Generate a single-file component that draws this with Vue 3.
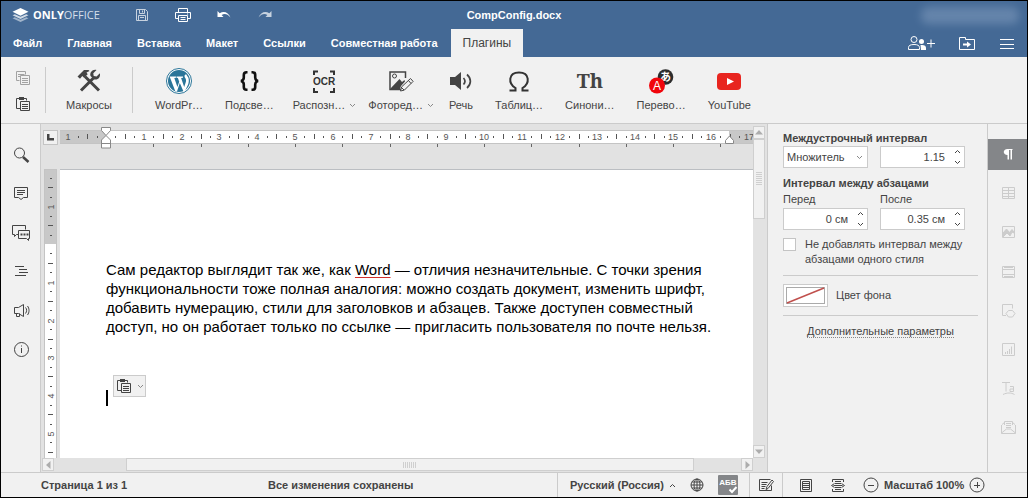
<script setup>
import { ref } from 'vue'

const tabs = ['Файл', 'Главная', 'Вставка', 'Макет', 'Ссылки', 'Совместная работа', 'Плагины']
const activeTab = ref('Плагины')

const plugins = [
  { id: 'wordpress', label: 'WordPr…' },
  { id: 'code', label: 'Подсве…' },
  { id: 'ocr', label: 'Распозн…', menu: true },
  { id: 'photo', label: 'Фоторед…', menu: true },
  { id: 'speech', label: 'Речь' },
  { id: 'symbols', label: 'Таблиц…' },
  { id: 'thesaurus', label: 'Синони…' },
  { id: 'translate', label: 'Перево…' },
  { id: 'youtube', label: 'YouTube' },
]

const before = ref('0 см')
const after = ref('0.35 см')
const spacing = ref('1.15')
const mode = ref('Множитель')
const noGap = ref(false)

const CM = 37.8
function scale(origin, from, to) {
  const marks = []
  for (let q = from * 4; q <= to * 4; q++) {
    if (q === 0) continue
    const pos = Math.round(origin + (q * CM) / 4)
    const kind = q % 4 === 0 ? 'num' : q % 2 === 0 ? 'half' : 'dot'
    marks.push({ pos, kind, text: Math.abs(q / 4) })
  }
  return marks
}
const hMarks = scale(46, -1, 17)
const vMarks = scale(75, -1.75, 5.5)
const tabStops = Array.from({ length: 13 }, (_, i) => Math.round(46 + (i + 1) * 1.25 * CM))
</script>

<template>
  <div class="app">
    <header class="header">
      <div class="titlebar">
        <div class="title-left">
          <a class="logo" href="#" aria-label="ONLYOFFICE">
            <svg width="17" height="14" viewBox="0 0 17 14">
              <path d="M8.500 14 0.500 10.300l2.300-1 5.700 2.500 5.700-2.500 2.300 1z" fill="#fff" opacity=".5" />
              <path d="M8.500 11 0.500 7.300l2.300-1 5.700 2.500 5.700-2.500 2.300 1z" fill="#fff" opacity=".75" />
              <path d="M8.500 0 16.500 3.800 8.500 7.700 0.500 3.800z" fill="#fff" />
            </svg>
            <span><b>ONLY</b>OFFICE</span>
          </a>
          <div class="quick">
            <button type="button" class="dim" aria-label="Сохранить">
              <svg width="16" height="16" viewBox="0 0 16 16" class="ln">
                <path d="M2.500 2.500h9l2 2v9h-11z M5.500 2.500v4h5v-4 M8.500 3.500v2 M4.500 13.500v-5h7v5 M6 10.500h4" />
              </svg>
            </button>
            <button type="button" aria-label="Печать">
              <svg width="16" height="16" viewBox="0 0 16 16" class="ln">
                <path d="M3.500 5.500v-4h9v4 M3.500 11.500h-3v-6h15v6h-3 M3.500 8.500h9v6h-9z M5.500 10.500h5 M5.500 12.500h5 M12 7h1" />
              </svg>
            </button>
            <button type="button" aria-label="Отменить">
              <svg width="16" height="16" viewBox="0 0 16 16">
                <path d="M1.500 4v6h6L5.600 8.100C8.500 6.200 11.500 7 14.500 10.500 12.500 5.500 8 3.500 3.700 6.200z" fill="#fff" />
              </svg>
            </button>
            <button type="button" class="dim" aria-label="Повторить">
              <svg width="16" height="16" viewBox="0 0 16 16">
                <path d="M14.500 4v6h-6l1.900-1.900C7.500 6.200 4.500 7 1.500 10.500 3.500 5.500 8 3.500 12.300 6.200z" fill="#fff" />
              </svg>
            </button>
          </div>
        </div>
        <h1 class="doc-name">CompConfig.docx</h1>
        <div class="user"><span class="smudge"></span></div>
      </div>
      <div class="tabbar">
        <nav class="tabs">
          <button v-for="t in tabs" :key="t" type="button" class="tab" :class="{ active: t === activeTab }" @click="activeTab = t">{{ t }}</button>
        </nav>
        <div class="tab-actions">
          <button type="button" aria-label="Совместный доступ">
            <svg width="28" height="16" viewBox="0 0 28 16" class="ln">
              <circle cx="7" cy="4.500" r="3" />
              <path d="M1.500 14.500v-2c0-2 2-3 5.500-3s5.500 1 5.500 3v2z M20 8.500h8 M24 4.500v8" />
              <circle cx="14.500" cy="6.500" r="2.500" fill="#fff" stroke="none" />
              <path d="M13.500 10c3.500-.5 5.500.5 5.500 3v2h-5z" fill="#fff" stroke="none" />
            </svg>
          </button>
          <button type="button" aria-label="Открыть расположение">
            <svg width="18" height="16" viewBox="0 0 18 16" class="ln">
              <path d="M1.500 14.500v-12h6v2h9v10z" />
              <path d="M5 9.500h5" stroke-width="2" />
              <path d="M9 6.500l4 3-4 3z" fill="#fff" stroke="none" />
            </svg>
          </button>
          <button type="button" aria-label="Меню">
            <svg width="16" height="16" viewBox="0 0 16 16" class="ln"><path d="M1 4.500h14M1 9.500h14M1 13.500h14" /></svg>
          </button>
        </div>
      </div>
    </header>

    <div class="toolbar">
      <div class="clip">
        <button type="button" class="faded" aria-label="Копировать">
          <svg width="16" height="16" viewBox="0 0 16 16" class="ln">
            <path d="M4.500 10.500h-3v-9h9v3 M3 4.500h2 M3 6.500h2 M3.500 4.500h6 M5.500 5.500h9v9h-9z M7 8.500h6M7 10.500h6M7 12.500h6" />
          </svg>
        </button>
        <button type="button" aria-label="Вставить">
          <svg width="16" height="16" viewBox="0 0 16 16" class="ln">
            <path d="M5.500 12.500h-4v-10h10v2 M5.500 5.500h9v9h-9z M7 8.500h6M7 10.500h6M7 12.500h6" />
            <path d="M4 1h5v3H4z" fill="#444" stroke="none" />
          </svg>
        </button>
      </div>
      <i class="sep"></i>
      <button type="button" class="plugin macros">
        <svg width="26" height="26" viewBox="0 0 26 26">
          <path d="M5 22.500 18 9.500" stroke="#444" stroke-width="3" />
          <path d="M9 8.500 23 22.500" stroke="#444" stroke-width="3" />
          <path d="M1.500 8.500 8 2h4.500l1 1-3 1.500 1.200 1.700L8 9.800 6.300 8 4 10.800z" fill="#444" />
          <path d="M20.500 2 17.300 5.200l.4 2.800 2.900.4L23.800 5.200C25 9.500 21.500 12.500 17.800 11.200L14.500 8C13.500 4.500 16.500 1 20.500 2z" fill="#444" />
        </svg>
        <span class="cap">Макросы</span>
      </button>
      <i class="sep"></i>
      <div class="plugins">
        <button v-for="p in plugins" :key="p.id" type="button" class="plugin" :class="{ 'has-menu': p.menu }">
          <svg width="28" height="26" viewBox="0 0 28 26">
            <template v-if="p.id === 'wordpress'">
              <circle cx="14" cy="13" r="12.500" fill="#fff" stroke="#2a7599" />
              <circle cx="14" cy="13" r="11" fill="#2a7599" />
              <path d="M4.600 8.500h6.400v1.200l-1.700.2 3.100 9.200 1.800-5.400-1.300-3.800-1.400-.2V8.500h6.500v1.200l-1.900.2 3.100 9.200 1.700-5.400c.6-2-.4-3.200-1-4.300-.7-1.300-.5-3 1.200-3.200l2.300 3.600c.7 2.600.4 4.600-.2 6.500L20 23l-1.500.5-3.700-8.500-2.900 8.700-1.700-.6L5.200 9.900z" fill="#fff" />
            </template>
            <g v-else-if="p.id === 'code'" fill="none" stroke="#111" stroke-width="2.600">
              <path d="M12.500 4.200h-1c-2 0-2.700 1-2.700 2.800v2.500c0 2-.8 3-2.800 3.500 2 .5 2.800 1.500 2.800 3.500V19c0 1.800.7 2.800 2.700 2.800h1" />
              <path d="M16.500 4.200h1c2 0 2.700 1 2.700 2.800v2.500c0 2 .8 3 2.800 3.500-2 .5-2.800 1.500-2.800 3.500V19c0 1.800-.7 2.800-2.700 2.800h-1" />
            </g>
            <g v-else-if="p.id === 'ocr'">
              <path d="M4 7V3.500h4 M20 3.500h4V7 M4 20v4h4 M20 24h4v-4" fill="none" stroke="#333" stroke-width="2" />
              <text x="14" y="17" text-anchor="middle" class="ocr">OCR</text>
            </g>
            <g v-else-if="p.id === 'photo'">
              <path d="M18.500 10V4H3v17.500h11" fill="none" stroke="#444" stroke-width="1.500" />
              <circle cx="7.500" cy="8" r="2" fill="none" stroke="#444" />
              <path d="M3.500 20.500 12.500 11l2.500 3 2.500-2 .5 1.500-4 4.500-1 3h-9z" fill="#444" />
              <path d="M13.500 23l1.200-4.200 8.800-8.300 2.600 2.900-8.700 8.700z" fill="#f1f1f1" stroke="#444" />
              <path d="M14.500 19.500l2.500 2.500M21.500 12.500l2.500 3" stroke="#444" />
            </g>
            <g v-else-if="p.id === 'speech'">
              <path d="M3 9h5l6-5v18l-6-5H3z" fill="#444" />
              <path d="M16.500 10c1.800 2 1.800 4.500 0 6.500 M20 6.500c4.500 4 4.500 9.500 0 13.500" fill="none" stroke="#444" stroke-width="1.700" />
            </g>
            <path v-else-if="p.id === 'symbols'" d="M4.500 22.500h6v-2.500C3 15.500 3 4.500 14 4.500s11 11 3.500 15.500v2.500h6" fill="none" stroke="#333" stroke-width="2" />
            <text v-else-if="p.id === 'thesaurus'" x="14" y="20" text-anchor="middle" class="th">Th</text>
            <g v-else-if="p.id === 'translate'">
              <circle cx="18.500" cy="9" r="7.800" fill="#2d2d2d" />
              <text x="18.500" y="13" text-anchor="middle" class="kana">あ</text>
              <circle cx="10" cy="17.500" r="8" fill="#f1060c" />
              <text x="10" y="22" text-anchor="middle" class="latin">A</text>
            </g>
            <g v-else>
              <rect x="2" y="5" width="24" height="17" rx="4" fill="#e8251f" />
              <path d="M12 10l7 3.500-7 3.500z" fill="#fff" />
            </g>
          </svg>
          <span class="cap">{{ p.label }}<svg v-if="p.menu" width="7" height="5" viewBox="0 0 7 5" class="chev"><path d="M1 1l2.500 2.500L6 1" /></svg></span>
        </button>
      </div>
    </div>

    <main class="body">
      <aside class="rail left">
        <button type="button" aria-label="Поиск">
          <svg width="20" height="20" viewBox="0 0 20 20" class="ln">
            <circle cx="8.500" cy="8" r="5" /><path d="M12 12l5.500 5" stroke-width="2.500" />
          </svg>
        </button>
        <button type="button" aria-label="Комментарии">
          <svg width="20" height="20" viewBox="0 0 20 20" class="ln">
            <path d="M3.500 3.500h13v10h-4l-2.500 2-2.500-2h-4z M6 6.500h8M6 8.500h8M6 10.500h6" />
          </svg>
        </button>
        <button type="button" aria-label="Чат">
          <svg width="20" height="20" viewBox="0 0 20 20" class="ln">
            <path d="M7 11.500H5.500l-2 2v-2h-2v-9h13v4 M7.500 7.500h11v8h-1v2l-2-2h-8z" />
            <path d="M9.500 11.500h2M12.500 11.500h2M15.500 11.500h2" stroke-width="2" />
          </svg>
        </button>
        <button type="button" aria-label="Навигация">
          <svg width="20" height="20" viewBox="0 0 20 20" class="ln">
            <path d="M4 4.500h9M8 7.500h8M8 10.500h9M4 13.500h11" />
          </svg>
        </button>
        <button type="button" aria-label="Обратная связь">
          <svg width="20" height="20" viewBox="0 0 20 20" class="ln">
            <path d="M3.500 6.500h4l5-3v12l-5-3h-4z M5.500 12.500v3h3v-3 M14.500 6.500c1.500 1.500 1.500 4 0 6 M16.500 5c2 2.500 2 6.500 0 9" />
          </svg>
        </button>
        <button type="button" aria-label="О программе">
          <svg width="20" height="20" viewBox="0 0 20 20" class="ln">
            <circle cx="10.500" cy="9.500" r="7" /><path d="M10.500 8v5M10.500 5.500v1" />
          </svg>
        </button>
      </aside>

      <section class="editor">
        <div class="corner"><button type="button" aria-label="Табуляция"><svg width="7" height="7" viewBox="0 0 7 7"><path d="M0 0h2.500v4H7v2.500H0z" fill="#444" /></svg></button></div>
        <div class="hruler">
          <svg class="hscale" width="100%" height="25">
            <rect x="0" y="6" width="100%" height="14" fill="#c8c8c8" />
            <rect x="46" y="6" width="623" height="14" fill="#fff" />
            <template v-for="m in hMarks" :key="m.pos">
              <text v-if="m.kind === 'num'" :x="m.pos" y="16" text-anchor="middle" class="num">{{ m.text }}</text>
              <rect v-else-if="m.kind === 'half'" :x="m.pos" y="10" width="1" height="5" fill="#555" />
              <rect v-else :x="m.pos" y="12" width="1" height="2" fill="#555" />
            </template>
            <path d="M0 6.500h800M0 19.500h800" stroke="#c4c4c4" />
            <rect v-for="s in tabStops" :key="'t' + s" :x="s" y="20" width="1" height="3" fill="#666" />
            <g fill="#fff" stroke="#888">
              <path d="M41.500 3.500h9v3l-4.500 5-4.500-5z" />
              <path d="M41.500 24v-8l4.500-4.500 4.500 4.500v8z M41.500 19.500h9" />
              <path d="M665.500 19.500v-3l4-4.500 4 4.500v3z" />
            </g>
          </svg>
        </div>
        <div class="vruler">
          <svg width="13" height="100%">
            <rect width="13" height="100%" fill="#fff" />
            <rect width="13" height="75" fill="#c8c8c8" />
            <template v-for="m in vMarks" :key="m.pos">
              <text v-if="m.kind === 'num'" :transform="`translate(10 ${m.pos + 1}) rotate(-90)`" text-anchor="middle" class="num">{{ m.text }}</text>
              <rect v-else-if="m.kind === 'half'" x="4" :y="m.pos" width="5" height="1" fill="#555" />
              <rect v-else x="6" :y="m.pos" width="2" height="1" fill="#555" />
            </template>
            <path d="M.5 0v600M12.500 0v600M0 .5h13" stroke="#c4c4c4" />
          </svg>
        </div>
        <article class="page">
          <p>
            Сам редактор выглядит так же, как <span class="typo">Word</span> — отличия незначительные. С точки зрения<br>
            функциональности тоже полная аналогия: можно создать документ, изменить шрифт,<br>
            добавить нумерацию, стили для заголовков и абзацев. Также доступен совместный<br>
            доступ, но он работает только по ссылке — пригласить пользователя по почте нельзя.
          </p>
          <div class="caret-line">
            <span class="caret"></span>
            <button type="button" class="paste" aria-label="Параметры вставки">
              <svg width="16" height="16" viewBox="0 0 16 16" class="ln">
                <path d="M5.500 12.500h-4v-10h10v2 M5.500 5.500h9v9h-9z M7 8.500h6M7 10.500h6M7 12.500h6" />
                <path d="M4 1h5v3H4z" fill="#444" stroke="none" />
              </svg>
              <svg width="7" height="5" viewBox="0 0 7 5" class="chev"><path d="M1 1l2.500 2.500L6 1" /></svg>
            </button>
          </div>
        </article>
        <div class="vscroll">
          <button type="button" aria-label="Вверх"><svg width="8" height="5" viewBox="0 0 8 5"><path d="M0 4.500 4 0l4 4.500z" fill="#adadad" /></svg></button>
          <div class="vthumb"><i></i></div>
          <button type="button" class="end" aria-label="Вниз"><svg width="8" height="5" viewBox="0 0 8 5"><path d="M0 .5 4 5 8 .5z" fill="#adadad" /></svg></button>
        </div>
        <div class="hscroll">
          <button type="button" aria-label="Влево"><svg width="5" height="8" viewBox="0 0 5 8"><path d="M4.500 0 0 4l4.500 4z" fill="#adadad" /></svg></button>
          <div class="htrack"><div class="hthumb"><i></i></div></div>
          <button type="button" aria-label="Вправо"><svg width="5" height="8" viewBox="0 0 5 8"><path d="M.5 0 5 4 .5 8z" fill="#adadad" /></svg></button>
        </div>
      </section>

      <aside class="panel">
        <label class="head" for="mode">Междустрочный интервал</label>
        <div class="pair">
          <div class="field">
            <select id="mode" v-model="mode"><option>Множитель</option><option>Минимум</option><option>Точно</option></select>
            <svg width="7" height="5" viewBox="0 0 7 5" class="chev pick"><path d="M1 1l2.500 2.500L6 1" /></svg>
          </div>
          <div class="field">
            <input v-model="spacing" type="text" aria-label="Значение интервала">
            <span class="spin">
              <button type="button" aria-label="Больше"><svg width="7" height="5" viewBox="0 0 7 5" class="chev dark"><path d="M1 4l2.500-2.500L6 4" /></svg></button>
              <button type="button" aria-label="Меньше"><svg width="7" height="5" viewBox="0 0 7 5" class="chev dark"><path d="M1 1l2.500 2.500L6 1" /></svg></button>
            </span>
          </div>
        </div>
        <div class="head second">Интервал между абзацами</div>
        <div class="pair">
          <div>
            <label class="lbl" for="before">Перед</label>
            <div class="field">
              <input id="before" v-model="before" type="text">
              <span class="spin">
                <button type="button" aria-label="Больше"><svg width="7" height="5" viewBox="0 0 7 5" class="chev dark"><path d="M1 4l2.500-2.500L6 4" /></svg></button>
                <button type="button" aria-label="Меньше"><svg width="7" height="5" viewBox="0 0 7 5" class="chev dark"><path d="M1 1l2.500 2.500L6 1" /></svg></button>
              </span>
            </div>
          </div>
          <div>
            <label class="lbl" for="after">После</label>
            <div class="field">
              <input id="after" v-model="after" type="text">
              <span class="spin">
                <button type="button" aria-label="Больше"><svg width="7" height="5" viewBox="0 0 7 5" class="chev dark"><path d="M1 4l2.500-2.500L6 4" /></svg></button>
                <button type="button" aria-label="Меньше"><svg width="7" height="5" viewBox="0 0 7 5" class="chev dark"><path d="M1 1l2.500 2.500L6 1" /></svg></button>
              </span>
            </div>
          </div>
        </div>
        <label class="check"><input v-model="noGap" type="checkbox"><span>Не добавлять интервал между<br>абзацами одного стиля</span></label>
        <div class="color-row">
          <button id="bg-color" type="button" class="swatch" aria-labelledby="bg-label">
            <svg width="39" height="17" viewBox="0 0 39 17"><rect x=".5" y=".5" width="38" height="16" fill="#fff" stroke="#aaa" /><path d="M1 16 38 1" stroke="#c0504d" stroke-width="1.500" /></svg>
          </button>
          <span id="bg-label">Цвет фона</span>
        </div>
        <div class="more"><a href="#">Дополнительные параметры</a></div>
      </aside>

      <aside class="rail right">
        <button type="button" class="on" aria-label="Параметры абзаца">
          <svg width="20" height="20" viewBox="0 0 20 20"><path d="M14.500 4H9.500C4.500 4 4.500 10 9.500 10v4.500H11V5h1.500v9.500H14V5h.5z" fill="#fff" /></svg>
        </button>
        <button type="button" aria-label="Таблица"><svg width="20" height="20" viewBox="0 0 20 20" class="ln"><path d="M4.500 3.500h12v11h-12z M4.500 6.500h12M4.500 9.500h12M4.500 12.500h12M10.500 3.500v11" /></svg></button>
        <button type="button" aria-label="Изображение"><svg width="20" height="20" viewBox="0 0 20 20" class="ln"><path d="M4.500 3.500h12v11h-12z" /><path d="M5 14V10l3.500-4 3 3.500 2.500-3 2 2.500v1l-2-1-2 4-3-3z" fill="#ccc" /></svg></button>
        <button type="button" aria-label="Колонтитулы"><svg width="20" height="20" viewBox="0 0 20 20" class="ln"><path d="M4.500 4.500h12v11h-12z M4.500 7.500h12M4.500 12.500h12M6 5.500h9M6 14.500h9" /></svg></button>
        <button type="button" aria-label="Фигура"><svg width="20" height="20" viewBox="0 0 20 20" class="ln"><path d="M8 14.500H4.500v-11h10v4" /><path d="M10.500 9.500h4l2.500 3-2.500 3.500h-4L8 12.500z" /></svg></button>
        <button type="button" aria-label="Диаграмма"><svg width="20" height="20" viewBox="0 0 20 20" class="ln"><path d="M4.500 3.500h12v12h-12z M7.500 14v-2M9.500 14v-3M11.500 14V9M13.500 14V6.500" /></svg></button>
        <button type="button" aria-label="Text Art"><svg width="20" height="20" viewBox="0 0 20 20" class="ln"><path d="M4 3.500h8M8 3.500v9M12 7.500h3.500v5H12v-2.500h3.500M5 15.500c4-2 8-2 11.500 0" /></svg></button>
        <button type="button" aria-label="Слияние"><svg width="20" height="20" viewBox="0 0 20 20" class="ln"><path d="M6.500 7V3.500h8V7 M4 6.500l2.500-2M17 6.500l-2.500-2 M3.500 7v8.500h14V7 M3.500 15l5-4h4l5 4 M8 5.500h5M8 7.500h5M8 9.500h5" /></svg></button>
      </aside>
    </main>

    <footer class="status">
      <span class="pages">Страница 1 из 1</span>
      <span class="saved">Все изменения сохранены</span>
      <div class="lang">
        <button type="button" class="lang-name">Русский (Россия)<svg width="7" height="5" viewBox="0 0 7 5" class="chev dark"><path d="M1 4l2.500-2.500L6 4" /></svg></button>
        <button type="button" aria-label="Язык документа"><svg width="16" height="16" viewBox="0 0 16 16" class="ln"><circle cx="8" cy="8" r="6" /><ellipse cx="8" cy="8" rx="3" ry="6" /><path d="M8 2v12M2 8h12M3 5h10M3 11h10" /></svg></button>
        <button type="button" aria-label="Проверка орфографии"><svg width="20" height="20" viewBox="0 0 20 20"><rect width="20" height="20" rx="1" fill="#848689" /><text x="10" y="10" text-anchor="middle" class="abc">АБВ</text><path d="M11.500 14.500l2.500 2.500 4.500-5" fill="none" stroke="#fff" stroke-width="2" /></svg></button>
      </div>
      <div class="review"><button type="button" aria-label="Рецензирование"><svg width="16" height="16" viewBox="0 0 16 16" class="ln"><path d="M12.500 2.500h-11v11h12v-5 M3.500 5.500h6M3.500 7.500h5M3.500 9.500h4M3.500 11.500h3" /><path d="M8 12.500l1-3 5-6.500 1.500 1.500-5.500 7z" fill="#f1f1f1" /></svg></button></div>
      <div class="zoom">
        <button type="button" aria-label="По размеру страницы"><svg width="16" height="16" viewBox="0 0 16 16" class="ln"><path d="M2.500 2.500h11v12h-11z M4.500 4.500h7v8h-7z M5 6.500h6M5 8.500h6M5 10.500h6" /></svg></button>
        <button type="button" aria-label="По ширине"><svg width="16" height="16" viewBox="0 0 16 16" class="ln"><path d="M2.500 5V2.500h11V5 M2.500 12v2.500h11V12 M5 4.500h6M5 12.500h6M5 6.500h6M5 10.500h6M3.500 8.500h9 M4.500 6.500l-3 2 3 2 M11.500 6.500l3 2-3 2" /></svg></button>
        <span class="scale">
          <button type="button" aria-label="Уменьшить"><svg width="16" height="16" viewBox="0 0 16 16" class="ln"><circle cx="8" cy="8" r="7" /><path d="M5 8.500h6" /></svg></button>
          <span>Масштаб 100%</span>
          <button type="button" aria-label="Увеличить"><svg width="16" height="16" viewBox="0 0 16 16" class="ln"><circle cx="8" cy="8" r="7" /><path d="M5 8.500h6M8.500 5v6" /></svg></button>
        </span>
      </div>
    </footer>
  </div>
</template>

<style>
body { background: #000; }
</style>

<style scoped>
.app {
  box-sizing: border-box;
  min-height: 100vh;
  display: flex;
  flex-direction: column;
  border: 1px solid #000;
  background: #f1f1f1;
  color: #444;
  font: 11px/15px "Liberation Sans", Arial, sans-serif;
}
.app *, .app *::before { box-sizing: border-box; }
button { border: 0; padding: 0; margin: 0; background: none; font: inherit; color: inherit; display: flex; align-items: center; justify-content: center; }
svg { display: block; flex: none; }
.ln { fill: none; stroke: #444; }
.chev { fill: none; stroke: #888; }
.chev.dark { stroke: #444; }

.header { background: #446995; color: #fff; }
.header .ln { stroke: #fff; }
.titlebar { height: 28px; display: grid; grid-template-columns: 1fr auto 1fr; align-items: center; }
.title-left { display: flex; align-items: center; }
.logo { width: 118px; padding-left: 11px; display: flex; align-items: center; gap: 4px; color: #d5dfeb; text-decoration: none; font: 11px/16px "Open Sans", sans-serif; }
.logo b { color: #fff; font-weight: 700; }
.quick { display: flex; gap: 25px; padding-left: 15px; }
.dim { opacity: .7; }
.doc-name { margin: 0; font-size: 11px; font-weight: 700; }
.user { justify-self: end; padding-right: 8px; }
.smudge { display: block; width: 98px; height: 17px; border-radius: 7px; background: #7b97ba; opacity: .6; filter: blur(4px); }
.tabbar { height: 28px; display: flex; justify-content: space-between; }
.tabs { display: flex; gap: 1px; }
.tab { padding: 0 12px; font-weight: 700; }
.tab.active { background: #f1f1f1; color: #444; font-size: 12px; font-weight: 400; }
.tab-actions { display: flex; align-items: center; gap: 23px; padding-right: 12px; }

.toolbar { display: flex; height: 67px; padding-top: 10px; border-bottom: 1px solid #cbcbcb; }
.clip { width: 44px; display: flex; flex-direction: column; align-items: center; gap: 10px; padding-top: 3px; }
.faded { opacity: .45; }
.sep { width: 1px; height: 46px; background: #cbcbcb; }
.plugin { flex-direction: column; justify-content: flex-start; gap: 4px; padding: 1px 11px 0; white-space: nowrap; }
.plugin > svg { overflow: visible; margin: 0 -2px; }
.plugin.macros { width: 86px; }
.plugin.has-menu { padding: 1px 4px 0 8px; }
.plugins { display: flex; padding-left: 11px; }
.cap { display: flex; align-items: center; gap: 4px; }
.ocr { font: 700 10px "Liberation Sans", sans-serif; fill: #333; }
.th { font: 700 20px "Noto Serif", "DejaVu Serif", serif; fill: #444; }
.kana { font: 700 11px "Noto Sans CJK JP", sans-serif; fill: #fff; }
.latin { font: 12px "Liberation Sans", sans-serif; fill: #fff; }

.body { flex: 1; display: flex; min-height: 0; }
.rail { width: 40px; display: flex; flex-direction: column; align-items: center; gap: 8px; padding-top: 15px; }
.rail button { width: 39px; height: 31px; }
.left { border-right: 1px solid #cbcbcb; }
.right { border-left: 1px solid #cbcbcb; }
.right .ln { stroke: #ccc; }
.rail .on { background: #848689; }

.editor { flex: 1; min-width: 0; display: grid; grid-template-columns: 19px 1fr 14px; grid-template-rows: 45px 1fr 14px; background: #e2e2e2; }
.corner { padding: 6px 0 0 2px; }
.corner button { width: 15px; height: 15px; border: 1px solid #c4c4c4; background: #f1f1f1; }
.hruler { min-width: 0; overflow: hidden; }
.vruler { position: relative; padding: 0 0 0 3px; }
.vruler svg { position: absolute; top: 0; }
.num { font: 9px "Liberation Sans", sans-serif; fill: #555; }
.page { background: #fff; border-top: 1px solid #bbbec2; padding: 90px 0 0 46px; color: #000; font-size: 15px; line-height: 19px; min-width: 0; overflow: hidden; }
.page p { margin: 0; white-space: nowrap; }
.typo { text-decoration: underline 1px #d0302c; text-underline-offset: 2px; }
.caret-line { position: relative; margin-top: 54px; height: 17px; }
.caret { display: block; width: 2px; height: 16px; background: #000; }
.paste { position: absolute; left: 7px; top: -15px; width: 33px; height: 22px; border: 1px solid #cbcbcb; background: #f1f1f1; gap: 5px; }
.vscroll { grid-column: 3; grid-row: 1 / 3; display: flex; flex-direction: column; padding: 2px 2px 0 0; }
.vscroll button, .hscroll button { width: 12px; height: 13px; background: #f1f1f1; border: 1px solid #cfcfcf; flex: none; }
.vscroll .end { margin-top: auto; }
.vthumb, .hthumb { background: #f1f1f1; border: 1px solid #cfcfcf; display: flex; align-items: center; justify-content: center; }
.vthumb { height: 80px; width: 12px; }
.vthumb i { width: 6px; height: 14px; background: repeating-linear-gradient(#cfcfcf 0 1px, transparent 1px 2px); }
.hscroll { grid-column: 1 / 3; display: flex; padding-left: 1px; }
.htrack { flex: 1; padding: 0 47px 0 72px; }
.hthumb { height: 13px; }
.hthumb i { width: 14px; height: 6px; background: repeating-linear-gradient(90deg, #cfcfcf 0 1px, transparent 1px 2px); }

.panel { width: 220px; border-left: 1px solid #cbcbcb; padding: 7px 9px 0 15px; }
.head { display: block; font-weight: 700; }
.second { margin-top: 8px; }
.pair { display: grid; grid-template-columns: 85px 85px; gap: 12px; }
.lbl { display: block; margin-top: 1px; margin-bottom: 1px; }
.field { position: relative; display: flex; width: 85px; height: 22px; background: #fff; border: 1px solid #cbcbcb; }
.field input, .field select { width: 100%; border: 0; margin: 0; background: none; color: #444; font: inherit; outline: 0; }
.field select { appearance: none; padding: 0 0 0 3px; }
.field input { padding: 0 19px 0 2px; text-align: right; }
.pick { position: absolute; right: 4px; top: 8px; pointer-events: none; }
.spin { position: absolute; right: 3px; top: 0; height: 20px; display: flex; flex-direction: column; justify-content: space-between; padding: 2px 0; }
.check { display: flex; gap: 9px; margin-top: 7px; padding-bottom: 8px; border-bottom: 1px solid #cbcbcb; }
.check input { appearance: none; flex: none; width: 13px; height: 13px; margin: 1px 0 0; border: 1px solid #c4c4c4; background: #fff; }
.color-row { display: flex; align-items: center; gap: 8px; padding: 8px 0; border-bottom: 1px solid #cbcbcb; }
.swatch { width: 45px; height: 23px; background: #fff; border: 1px solid #cbcbcb; }
.more { text-align: center; padding-top: 8px; }
.more a { color: #444; text-decoration: none; border-bottom: 1px dotted #888; }

.status { height: 25px; flex: none; display: flex; align-items: center; border-top: 1px solid #cbcbcb; font-weight: 700; white-space: nowrap; }
.pages { padding-left: 40px; width: 267px; }
.saved { flex: 1; }
.lang, .review { height: 100%; display: flex; align-items: center; border-left: 1px solid #cbcbcb; }
.lang { width: 192px; padding-left: 12px; gap: 13px; }
.lang-name { gap: 5px; }
.review { width: 34px; justify-content: center; border-right: 1px solid #cbcbcb; }
.abc { font: 700 8px "Liberation Sans", sans-serif; fill: #fff; }
.zoom { width: 244px; padding-left: 15px; display: flex; gap: 16px; }
.scale { display: flex; align-items: center; gap: 5px; padding-left: 1px; }
</style>
